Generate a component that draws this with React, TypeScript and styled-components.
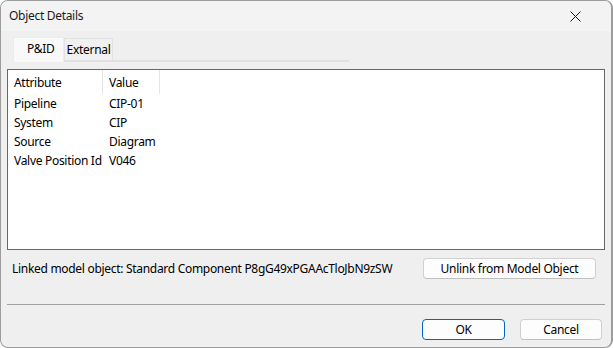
import React from "react";
import styled, { createGlobalStyle } from "styled-components";

const Global = createGlobalStyle`
  html, body { margin: 0; padding: 0; background: #ffffff; }
  body { font-family: "Segoe UI", "Noto Sans", "Liberation Sans", sans-serif; font-size: 12px; letter-spacing: -0.3px; color: #000; }
`;

const Window = styled.div`
  box-sizing: border-box;
  width: 613px;
  height: 348px;
  border: 1px solid #9c9c9c;
  border-right-width: 2px;
  border-radius: 8px;
  background: #efefef;
  display: flex;
  flex-direction: column;
  overflow: hidden;
`;

const TitleBar = styled.div`
  height: 30px;
  flex: none;
  background: #f3f3f3;
  display: flex;
  align-items: center;
  justify-content: space-between;
  padding: 0 0 0 8px;
`;

const Title = styled.span`
  font-size: 12px;
  color: #1a1a1a;
  margin-top: -1px;
`;

const CloseBtn = styled.div`
  width: 46px;
  height: 30px;
  display: flex;
  align-items: center;
  justify-content: center;
  margin-right: 13px;
`;

const Body = styled.div`
  flex: 1;
  display: flex;
  flex-direction: column;
  padding: 6px 6px 0 6px;
`;

const TabStrip = styled.div`
  display: flex;
  align-items: flex-end;
  width: 336px;
  margin-left: 6px;
  height: 25px;
  border-bottom: 2px solid #e0e0e0;
  box-sizing: border-box;
`;

const Tab = styled.div<{ $active?: boolean }>`
  box-sizing: border-box;
  height: ${(p) => (p.$active ? 25 : 22)}px;
  margin-bottom: ${(p) => (p.$active ? -2 : 0)}px;
  padding: ${(p) => (p.$active ? "0 8px 4px 13px" : "0 2px")};
  display: flex;
  align-items: center;
  background: ${(p) => (p.$active ? "#f9f9f9" : "#f0f0f0")};
  border: 1px solid ${(p) => (p.$active ? "#ececec" : "#e2e2e2")};
  border-bottom: none;
  font-size: 12px;
  color: #000;
`;

const ListBox = styled.div`
  box-sizing: border-box;
  margin-top: 7px;
  height: 181px;
  border: 1px solid #676767;
  background: #ffffff;
  display: flex;
  flex-direction: column;
`;

const Grid = styled.div`
  display: grid;
  grid-template-columns: 95px 57px;
`;

const HeaderCell = styled.div`
  height: 24px;
  display: flex;
  align-items: center;
  padding-left: 6px;
  border-right: 1px solid #e5e5e5;
  color: #000;
`;

const Cell = styled.div`
  height: 19px;
  display: flex;
  align-items: center;
  padding-left: 6px;
  white-space: nowrap;
`;

const LinkRow = styled.div`
  display: flex;
  align-items: center;
  justify-content: space-between;
  margin-top: 8px;
  padding-left: 5px;
  padding-right: 9px;
`;

const LinkText = styled.span`
  font-size: 12px;
`;

const Button = styled.button<{ $primary?: boolean; $w: number }>`
  box-sizing: border-box;
  width: ${(p) => p.$w}px;
  height: 21px;
  font-family: inherit;
  font-size: 12px;
  letter-spacing: inherit;
  color: #000;
  background: #fdfdfd;
  border: 1px solid ${(p) => (p.$primary ? "#0067c0" : "#d0d0d0")};
  border-bottom-color: ${(p) => (p.$primary ? "#0067c0" : "#c0c0c0")};
  border-radius: 4px;
  padding: 0;
  display: flex;
  align-items: center;
  justify-content: center;
`;

const Separator = styled.div`
  margin-top: 25px;
  height: 1px;
  background: #a0a0a0;
`;

const ButtonRow = styled.div`
  display: flex;
  justify-content: flex-end;
  gap: 15px;
  margin-top: 14px;
  padding-right: 3px;
`;

const rows: [string, string][] = [
  ["Pipeline", "CIP-01"],
  ["System", "CIP"],
  ["Source", "Diagram"],
  ["Valve Position Id", "V046"],
];

export default function App() {
  return (
    <>
      <Global />
      <Window>
        <TitleBar>
          <Title>Object Details</Title>
          <CloseBtn>
            <svg width="11" height="11" viewBox="0 0 11 11">
              <path d="M0.5 0.5 L10.5 10.5 M10.5 0.5 L0.5 10.5" stroke="#1a1a1a" strokeWidth="1" />
            </svg>
          </CloseBtn>
        </TitleBar>
        <Body>
          <TabStrip>
            <Tab $active>P&amp;ID</Tab>
            <Tab>External</Tab>
          </TabStrip>
          <ListBox>
            <Grid>
              <HeaderCell>Attribute</HeaderCell>
              <HeaderCell>Value</HeaderCell>
              {rows.map(([a, v]) => (
                <React.Fragment key={a}>
                  <Cell>{a}</Cell>
                  <Cell>{v}</Cell>
                </React.Fragment>
              ))}
            </Grid>
          </ListBox>
          <LinkRow>
            <LinkText>Linked model object: Standard Component P8gG49xPGAAcTloJbN9zSW</LinkText>
            <Button $w={173}>Unlink from Model Object</Button>
          </LinkRow>
          <Separator />
          <ButtonRow>
            <Button $primary $w={83}>OK</Button>
            <Button $w={82}>Cancel</Button>
          </ButtonRow>
        </Body>
      </Window>
    </>
  );
}
